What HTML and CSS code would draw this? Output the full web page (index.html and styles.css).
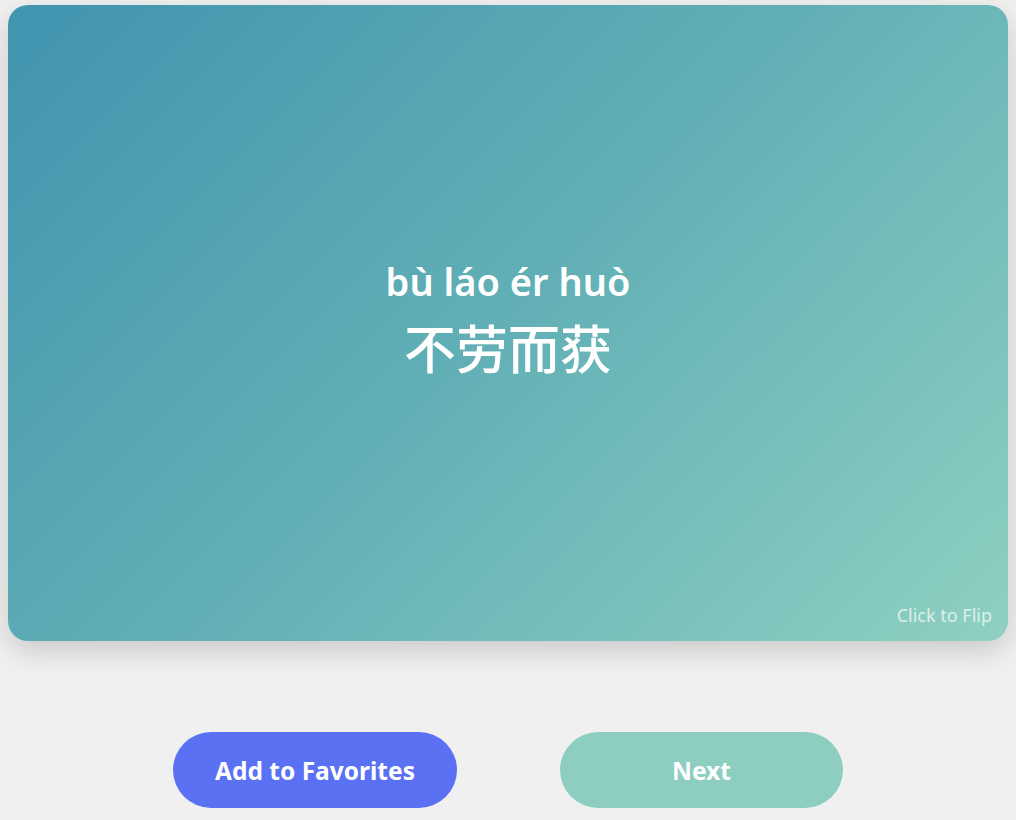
FILE: index.html
```html
<!DOCTYPE html>
<html lang="zh">
<head>
<meta charset="utf-8">
<title>Flashcard</title>
<link rel="stylesheet" href="styles.css">
</head>
<body>
<main class="page">
  <section class="card">
    <div class="card-face">
      <div class="pinyin">bù láo ér huò</div>
      <div class="hanzi">不劳而获</div>
    </div>
    <span class="hint">Click to Flip</span>
  </section>
  <div class="actions">
    <button class="btn btn-fav">Add to Favorites</button>
    <button class="btn btn-next">Next</button>
  </div>
</main>
</body>
</html>
```

FILE: styles.css
```css
html, body {
  margin: 0;
  padding: 0;
  background: #f0f0f0;
  font-family: "Noto Sans", "Open Sans", "Noto Sans CJK SC", sans-serif;
}

.page {
  padding: 5px 8px 0;
  display: flex;
  flex-direction: column;
  align-items: center;
}

.card {
  position: relative;
  width: 1000px;
  height: 636px;
  border-radius: 20px;
  background: linear-gradient(135deg, #4194af 0%, #62b0b6 50%, #8fd0c1 100%);
  box-shadow: 0 10px 28px rgba(0, 0, 0, 0.16);
  display: flex;
  align-items: center;
  justify-content: center;
  color: #ffffff;
}

.card-face {
  display: flex;
  flex-direction: column;
  align-items: center;
  margin-top: -7px;
}

.pinyin {
  font-size: 38px;
  font-weight: 600;
  line-height: 50px;
}

.hanzi {
  margin-top: 5px;
  font-family: "Noto Sans CJK SC", sans-serif;
  font-size: 52px;
  font-weight: 500;
  line-height: 72px;
}

.hint {
  position: absolute;
  right: 16px;
  bottom: 14px;
  font-size: 18px;
  color: rgba(255, 255, 255, 0.72);
}

.actions {
  margin-top: 91px;
  display: flex;
  gap: 103px;
}

.btn {
  width: 284px;
  height: 76px;
  border: none;
  border-radius: 38px;
  color: #ffffff;
  font-family: "Noto Sans", "Open Sans", sans-serif;
  font-size: 24.5px;
  font-weight: 700;
  cursor: pointer;
}

.btn-fav {
  background: #5a71f4;
}

.btn-next {
  width: 283px;
  background: #8ecec0;
}
```
